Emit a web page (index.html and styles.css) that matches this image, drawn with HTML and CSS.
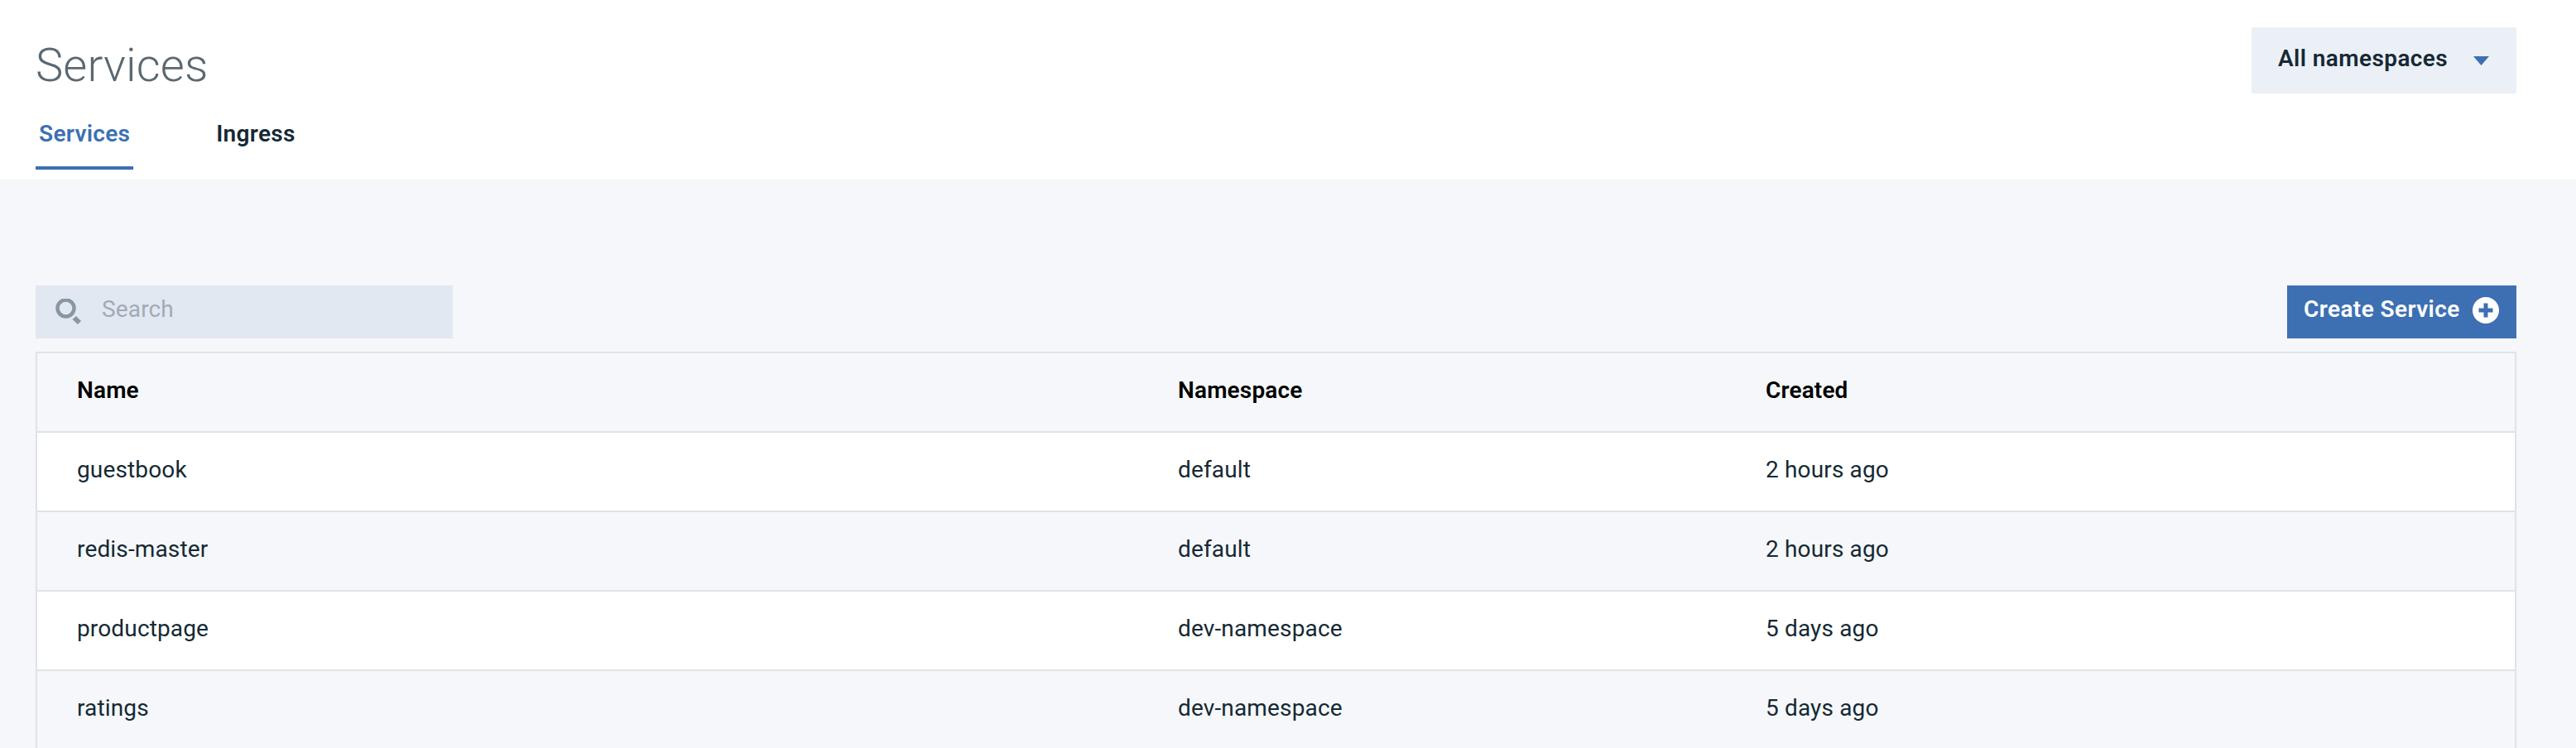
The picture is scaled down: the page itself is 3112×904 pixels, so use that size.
FILE: index.html
```html
<!DOCTYPE html>
<html lang="en">
<head>
    <meta charset="UTF-8">
    <title>Services</title>
    <link rel="stylesheet" href="styles.css">
</head>
<body>
<header class="page-header">
    <div class="header-left">
        <h1 class="page-title">Services</h1>
        <nav class="tabs">
            <a class="tab tab-active">Services</a>
            <a class="tab">Ingress</a>
        </nav>
    </div>
    <div class="dropdown">
        <span class="dropdown-label">All namespaces</span>
        <svg class="caret" width="19" height="11" viewBox="0 0 19 11"><path d="M0 0h19l-9.5 11z"/></svg>
    </div>
</header>

<main class="content">
    <div class="toolbar">
        <div class="search">
            <svg class="search-icon" width="32" height="32" viewBox="0 0 32 32">
                <circle cx="12.500" cy="11.500" r="10" fill="none" stroke="#8897a2" stroke-width="4.500"/>
                <path d="M20.500 25l4.500-4 6 6-4 4z" fill="#8897a2"/>
            </svg>
            <span class="search-placeholder">Search</span>
        </div>
        <button class="create-btn">
            <span class="create-label">Create Service</span>
            <svg class="create-icon" width="32" height="32" viewBox="0 0 32 32">
                <circle cx="16" cy="16" r="16" fill="#fff"/>
                <path d="M13.500 7.500h5v6h6v5h-6v6h-5v-6h-6v-5h6z" fill="#3d70b2"/>
            </svg>
        </button>
    </div>

    <table class="services">
        <colgroup>
            <col class="col-name">
            <col class="col-namespace">
            <col>
        </colgroup>
        <thead>
            <tr><th>Name</th><th>Namespace</th><th>Created</th></tr>
        </thead>
        <tbody>
            <tr><td>guestbook</td><td>default</td><td>2 hours ago</td></tr>
            <tr><td>redis-master</td><td>default</td><td>2 hours ago</td></tr>
            <tr><td>productpage</td><td>dev-namespace</td><td>5 days ago</td></tr>
            <tr><td>ratings</td><td>dev-namespace</td><td>5 days ago</td></tr>
        </tbody>
    </table>
</main>
</body>
</html>
```

FILE: styles.css
```css
html, body {
    margin: 0;
    padding: 0;
    height: 100%;
    overflow: hidden;
    background: #f5f7fa;
    color: #152934;
    font-family: "Roboto", "Liberation Sans", sans-serif;
    font-size: 28px;
    letter-spacing: 0.15px;
}

.page-header {
    height: 217px;
    box-sizing: border-box;
    padding: 0 72px 0 43px;
    background: #fff;
    display: flex;
    justify-content: space-between;
    align-items: flex-start;
}
.page-title {
    margin: 0;
    padding: 46px 0 0 0;
    height: 122px;
    box-sizing: border-box;
    font-size: 56px;
    line-height: 66px;
    font-weight: 300;
    color: #5a6872;
}
.tabs {
    display: flex;
    gap: 96px;
}
.tab {
    display: block;
    padding: 20px 4px 19px;
    font-weight: 600;
    line-height: 40px;
    letter-spacing: 0.3px;
    border-bottom: 4px solid transparent;
}
.tab-active {
    color: #3d70b2;
    border-bottom-color: #3d70b2;
}

.dropdown {
    margin-top: 33px;
    width: 320px;
    height: 80px;
    box-sizing: border-box;
    padding: 0 33px 0 32px;
    background: #ebf0f7;
    display: flex;
    align-items: center;
    justify-content: space-between;
    font-weight: 600;
}
.dropdown-label {
    margin-bottom: 6px;
    letter-spacing: 0.4px;
}
.caret {
    fill: #3d70b2;
}

.content {
    padding: 128px 72px 0 43px;
}
.toolbar {
    display: flex;
    justify-content: space-between;
    margin-bottom: 16px;
}
.search {
    width: 504px;
    height: 64px;
    box-sizing: border-box;
    padding-left: 24px;
    background: #e2e8f1;
    display: flex;
    align-items: center;
    gap: 24px;
}
.search-placeholder {
    margin-bottom: 7px;
    color: #a0abb5;
}
.create-btn {
    width: 277px;
    height: 64px;
    border: 0;
    padding: 0 21px 0 20px;
    background: #3d70b2;
    color: #fff;
    font: inherit;
    font-weight: 600;
    display: flex;
    align-items: center;
    justify-content: space-between;
}
.create-label {
    margin-bottom: 7px;
    letter-spacing: 0.4px;
}
.create-icon {
    margin-bottom: 5px;
}

.services {
    width: 100%;
    border-collapse: separate;
    border-spacing: 0;
    table-layout: fixed;
    border: 2px solid #dfe3e6;
    border-bottom: 0;
}
.col-name {
    width: 1330px;
}
.col-namespace {
    width: 710px;
}
.services th, .services td {
    height: 88px;
    padding: 0 0 6px 48px;
    text-align: left;
    border-bottom: 2px solid #dfe3e6;
}
.services th {
    color: #000;
    font-weight: 600;
}
.services tbody tr:nth-child(odd) {
    background: #fff;
}
```
